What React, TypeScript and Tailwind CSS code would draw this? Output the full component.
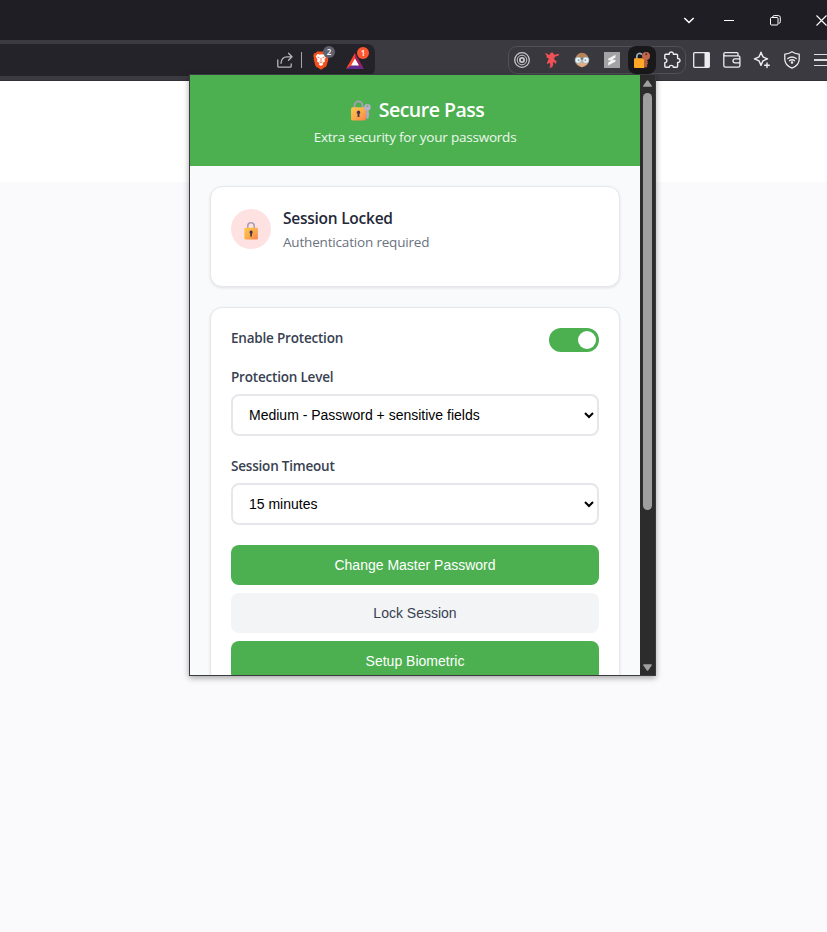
import React from "react";

function Padlock({ className, withKey = false }: { className: string; withKey?: boolean }) {
  return (
    <svg className={className} viewBox={withKey ? "0 0 20 20" : "0 0 16 20"} fill="none">
      <defs>
        <linearGradient id={withKey ? "lockKey" : "lockPlain"} x1="0" y1="0" x2="1" y2="1">
          <stop offset="0" stopColor="#fdc850" />
          <stop offset="0.5" stopColor="#fbad48" />
          <stop offset="1" stopColor="#f9804f" />
        </linearGradient>
      </defs>
      <path
        d={withKey ? "M4.3 8V5.2a3.8 3.8 0 0 1 7.6 0V8" : "M4.6 8V5.2a3.4 3.4 0 0 1 6.8 0V8"}
        stroke="#aaa0b5"
        strokeWidth="1.7"
      />
      <rect x="1" y="7" width="14.2" height="12.6" rx="1.5" fill={withKey ? "url(#lockKey)" : "url(#lockPlain)"} />
      <path d="M8.1 10a1.8 1.8 0 0 1 .9 3.3v3H7.2v-3A1.8 1.8 0 0 1 8.1 10Z" fill="#4b3150" />
      {withKey && (
        <g>
          <path d="M15.4 8.5h2.4v3.2l.8.9-.8.9.6.9-.6.9v1.9l-1.2 1-1.2-1Z" fill="#b3a6c5" />
          <circle cx="16.6" cy="7" r="3.1" fill="#b9afc9" />
          <circle cx="16.7" cy="5.7" r="0.8" fill="#58a75d" />
        </g>
      )}
    </svg>
  );
}

function ShareIcon() {
  return (
    <svg className="h-4 w-4" viewBox="0 0 16 16" fill="none" stroke="#b6b6bc" strokeWidth="1.3" strokeLinecap="round" strokeLinejoin="round">
      <path d="M.8 8v6.2q0 1 1 1h11.4q1 0 1-1v-2.4M4 11.3c.3-4.2 2.6-6.5 6-6.5h4.8M11.5 1.2l3.5 3.6-3.5 3.4" />
    </svg>
  );
}

function LionIcon() {
  return (
    <svg className="h-[19px] w-4" viewBox="0 0 16 19">
      <path d="M4 .5h8l1.4 1.7 1.4-.1 1 3-.8 1.8.4 1.3-2 7L8 18.8l-5.4-3.6-2-7L1 6.9.2 5l1-3 1.4.2Z" fill="#f4511e" />
      <path d="m4.5 3 2 .6L8 3.2l1.5.4 2-.6 1.8 2.4-1.8 3 .5 2-2.4 1.6.6 1.5L8 15l-2.2-1.5.6-1.5L4 10.4l.5-2-1.8-3Z" fill="#fff" />
      <path d="m4.5 6 2 .7M11.5 6l-2 .7M8 7v3.5M6.5 10.8 8 11.6l1.5-.8" stroke="#f4511e" strokeWidth=".8" fill="none" />
    </svg>
  );
}

function TriangleIcon() {
  return (
    <svg className="h-4 w-[18px]" viewBox="0 0 18 16">
      <path d="M9 0 0 16l9-5.5Z" fill="#ff4724" />
      <path d="M9 0v10.5L18 16Z" fill="#9e1f63" />
      <path d="M0 16h18l-9-6Z" fill="#662d91" />
      <path d="m9 5.5 4 7H5Z" fill="#fff" />
    </svg>
  );
}

function TargetIcon() {
  return (
    <svg className="h-4 w-4" viewBox="0 0 16 16" fill="none" stroke="#c7c7cb">
      <circle cx="8" cy="8" r="7.3" strokeWidth="1.3" />
      <circle cx="8" cy="8" r="4.8" strokeWidth="1" />
      <circle cx="8" cy="8" r="2.1" strokeWidth="1.8" />
    </svg>
  );
}

function BirdIcon() {
  return (
    <svg className="h-4 w-4" viewBox="0 0 16 16" fill="#ef5154">
      <path d="M.8.8 4 2.3 5.6 3l1-2.2 2.2-.3 1.4 2.2 5.1-.9-.8 1.8-3 1-1.6 1.8 1 1.6 1.9 1.6-1.5 2.6-.8-2-1.5.2.2 2.8-1.4 2.3H5l1.4-2-.7-2.8L3.5 12l-.7-.8L4.2 8 5 6.8 1.8 4.9l1.3-.5Z" />
    </svg>
  );
}

function FaceIcon() {
  return (
    <svg className="h-4 w-4" viewBox="0 0 16 16">
      <ellipse cx="8" cy="8" rx="7" ry="7.2" fill="#b5835a" />
      <path d="M2 8h12l-1.2 4.5L8 15.2l-4.8-2.7Z" fill="#dfae89" />
      <path d="M.6 6h14.8v2H.6Z" fill="#566069" />
      <circle cx="4.2" cy="8.2" r="3.1" fill="#eef6f9" stroke="#8ba7b4" strokeWidth=".7" />
      <circle cx="11.8" cy="8.2" r="3.1" fill="#eef6f9" stroke="#8ba7b4" strokeWidth=".7" />
      <circle cx="4.6" cy="8.2" r="1" fill="#7ba3b8" />
      <circle cx="11.4" cy="8.2" r="1" fill="#7ba3b8" />
    </svg>
  );
}

function StackIcon() {
  return (
    <svg className="h-4 w-4" viewBox="0 0 16 16">
      <rect width="16" height="16" fill="#a3a3a5" />
      <path d="m4.2 6.8 7.3-4v2.8l-3.4 2 3.4.3v1.5l-7.3 4v-2.8l3.4-2-3.4-.4Z" fill="#f5f5f5" />
    </svg>
  );
}

function LockKeyIcon() {
  return (
    <svg className="h-4 w-4" viewBox="0 0 16 16" fill="none">
      <path d="M2.8 7V4.3a2.8 2.8 0 0 1 5.2-1.5" stroke="#a2b2bd" strokeWidth="1.7" />
      <rect x="0" y="6.3" width="10.6" height="9.7" rx="1" fill="#ffa827" />
      <path d="M10.6 6.5h2.6v2.2l1 .8-1 1 1 1-1 .9v2.2L12 15.8l-1.4-1.2Z" fill="#b55a43" />
      <circle cx="12" cy="4" r="4" fill="#c1674e" />
      <circle cx="12.2" cy="2.2" r="1" fill="#5b302b" />
    </svg>
  );
}

function PuzzleIcon() {
  return (
    <svg className="h-[18px] w-[18px]" viewBox="0 0 18 18" fill="none" stroke="#ededf1" strokeWidth="1.4" strokeLinejoin="round">
      <path d="M2.8 3.2h3.5C5.8.2 10.8.2 10.3 3.2h3.3q1 0 1 1v3.3c3.2-.2 3.2 4.2 0 4v3.8q0 1-1 1h-3.3c.2-2.6-4.2-2.6-4 0H2.8q-1 0-1-1v-3.7c2.8.2 2.8-4.2 0-4V4.2q0-1 1-1Z" />
    </svg>
  );
}

function SidebarIcon() {
  return (
    <svg className="mr-px h-4 w-[17px]" viewBox="0 0 17 16">
      <rect x=".7" y=".7" width="15.6" height="14.6" rx=".8" fill="none" stroke="#ededf1" strokeWidth="1.3" />
      <path d="M11.5 1H16v14h-4.5Z" fill="#ededf1" />
    </svg>
  );
}

function WalletIcon() {
  return (
    <svg className="h-4 w-[18px]" viewBox="0 0 18 16" fill="none" stroke="#ededf1" strokeWidth="1.3" strokeLinejoin="round">
      <path d="M15 4V2q0-1.3-1.3-1.3H2.3Q.8.7.8 2.2v11.3q0 1.7 1.7 1.7h12.8q1.6 0 1.6-1.6V5.3q0-1.4-1.6-1.4H2.5Q.8 3.9.8 2.2M17 6.8h-5q-2 0-2 2t2 2h5" />
    </svg>
  );
}

function SparkIcon() {
  return (
    <svg className="h-[18px] w-[18px]" viewBox="0 0 18 18" fill="none" stroke="#ededf1" strokeWidth="1.4" strokeLinejoin="round" strokeLinecap="round">
      <path d="M8 1.2Q9 3.9 10 5.8q1.9 1 4.6 2-2.7 1-4.6 2-1 1.9-2 4.6-1-2.7-2-4.6-1.9-1-4.6-2 2.7-1 4.6-2 1-1.9 2-4.6ZM14 12v4.5M11.7 14.2h4.6" />
    </svg>
  );
}

function ShieldIcon() {
  return (
    <svg className="h-[18px] w-4" viewBox="0 0 16 18" fill="none" stroke="#ededf1" strokeWidth="1.3" strokeLinejoin="round" strokeLinecap="round">
      <path d="M8 .8q3.4 2.3 7.2 2.4v5.3Q15 14.4 8 17.2 1 14.4.8 8.5V3.2Q4.6 3.1 8 .8ZM3.8 7.5q4.2-3 8.4 0M5.4 9.7q2.6-1.9 5.2 0" />
      <circle cx="8" cy="11.6" r=".6" fill="#ededf1" />
    </svg>
  );
}

function WindowBar() {
  return (
    <div className="flex h-10 shrink-0 items-center bg-[#1f1e24] pl-[683px]">
      <svg className="h-3 w-3 shrink-0" viewBox="0 0 12 12" fill="none" stroke="#fff" strokeWidth="1.6">
        <path d="m1.3 4 4.7 4.5L10.7 4" />
      </svg>
      <div className="ml-[29px] h-px w-[10px] shrink-0 bg-white" />
      <svg className="ml-9 h-[11px] w-[11px] shrink-0" viewBox="0 0 11 11" fill="none" stroke="#fff">
        <rect x=".5" y="2.5" width="7.5" height="7.5" rx="1" />
        <path d="M2.5 2.5Q2.5.6 4.2.6h4.2q1.9 0 1.9 1.9v4.3q0 1.5-1.5 1.5" />
      </svg>
      <svg className="ml-[35px] h-[11px] w-[11px] shrink-0" viewBox="0 0 11 11" stroke="#fff" strokeWidth="1.1">
        <path d="m.5.5 10 10m0-10-10 10" />
      </svg>
    </div>
  );
}

function Slot({ children }: { children: React.ReactNode }) {
  return <div className="flex w-[30px] shrink-0 items-center justify-center">{children}</div>;
}

function Toolbar() {
  return (
    <div className="flex h-[41px] shrink-0 items-center border-b border-[#313036] bg-[#3b3a40]">
      <div className="flex h-8 w-[375px] shrink-0 items-center rounded-r-[8px] bg-[#242329] pl-[277px]">
        <ShareIcon />
        <div className="ml-2 h-4 w-px bg-[#a5a5aa]" />
        <div className="relative ml-[11px] mt-px">
          <LionIcon />
          <span className="absolute -top-[5px] left-[10px] flex h-3 w-3 items-center justify-center rounded-full bg-[#60616e] font-['Open_Sans',sans-serif] text-[8px] font-semibold leading-none text-white">2</span>
        </div>
        <div className="relative ml-[17px] mt-px">
          <TriangleIcon />
          <span className="absolute -top-[6px] left-[11px] flex h-3 w-3 items-center justify-center rounded-full bg-[#ff5630] font-['Open_Sans',sans-serif] text-[8px] font-semibold leading-none text-white">1</span>
        </div>
      </div>
      <div className="ml-[133px] flex h-7 w-[178px] shrink-0 items-center rounded-[9px] border border-[#515056] bg-[#39383e] pr-px">
        <div className="-ml-0.5 flex h-full items-center">
          <Slot><TargetIcon /></Slot>
          <Slot><BirdIcon /></Slot>
          <Slot><FaceIcon /></Slot>
          <Slot><StackIcon /></Slot>
          <div className="mx-px flex h-7 w-7 items-center justify-center rounded-[8px] bg-[#19191b]"><LockKeyIcon /></div>
          <Slot><PuzzleIcon /></Slot>
        </div>
      </div>
      <div className="ml-px flex shrink-0 items-center">
        <Slot><SidebarIcon /></Slot>
        <Slot><WalletIcon /></Slot>
        <Slot><SparkIcon /></Slot>
        <Slot><ShieldIcon /></Slot>
        <div className="ml-[7px] flex w-[14px] flex-col gap-1">
          <i className="h-[1.5px] bg-[#dedee2]" />
          <i className="h-[1.5px] bg-[#dedee2]" />
          <i className="h-[1.5px] bg-[#dedee2]" />
        </div>
      </div>
    </div>
  );
}

function SelectField({ label, value }: { label: string; value: string }) {
  return (
    <label className="flex flex-col">
      <span className="h-5 text-[13.5px] font-semibold leading-5 tracking-[-0.2px] text-[#374151]">{label}</span>
      <select
        defaultValue={value}
        className="mt-[7px] h-[42px] w-full rounded-[8px] border-2 border-[#e5e7eb] bg-white px-3 font-['Liberation_Sans',Arial,sans-serif] text-[14px] text-black"
      >
        <option>{value}</option>
      </select>
    </label>
  );
}

function ActionButton({ children, muted = false }: { children: string; muted?: boolean }) {
  return (
    <button
      className={`h-10 w-full shrink-0 rounded-[8px] font-['Liberation_Sans',Arial,sans-serif] text-[14px] ${
        muted ? "bg-[#f3f4f6] text-[#374151]" : "bg-[#4caf50] text-white"
      }`}
    >
      {children}
    </button>
  );
}

function Popup() {
  return (
    <div className="absolute left-[189px] top-[74px] flex h-[602px] w-[467px] border border-[#3b3a40] bg-[#f9fafb] font-['Open_Sans','Noto_Sans',sans-serif] shadow-[0_2px_6px_rgba(0,0,0,0.35)]">
      <div className="flex h-full w-[450px] shrink-0 flex-col overflow-hidden">
        <header className="flex h-[91px] shrink-0 flex-col items-center bg-[#4caf50] pt-5 text-white">
          <h1 className="flex h-[30px] items-center pl-1 text-[19.5px] font-semibold leading-[30px] tracking-[-0.5px]">
            <Padlock withKey className="mr-2 h-[21px] w-[21px]" />
            Secure Pass
          </h1>
          <p className="mt-0.5 text-[13.5px] leading-5 tracking-[-0.22px] text-white/90">Extra security for your passwords</p>
        </header>
        <main className="flex flex-col gap-5 p-5">
          <section className="flex h-[101px] shrink-0 items-start rounded-[12px] border border-[#e5e7eb] bg-white px-5 pt-[22px] shadow-[0_1px_3px_rgba(0,0,0,0.1)]">
            <div className="flex h-10 w-10 items-center justify-center rounded-full bg-[#fee2e2]">
              <Padlock className="mt-0.5 h-[19px] w-4" />
            </div>
            <div className="ml-3 -mt-[3px]">
              <h2 className="text-[15.5px] font-semibold leading-6 tracking-[-0.25px] text-[#1f2937]">Session Locked</h2>
              <p className="mt-0.5 text-[13.5px] leading-5 tracking-[-0.18px] text-[#6b7280]">Authentication required</p>
            </div>
          </section>
          <section className="flex h-[520px] shrink-0 flex-col rounded-[12px] border border-[#e5e7eb] bg-white px-5 pt-5 shadow-[0_1px_3px_rgba(0,0,0,0.1)]">
            <div className="mb-[15px] flex h-6 items-start justify-between">
              <span className="text-[13.5px] font-semibold leading-5 tracking-[-0.2px] text-[#374151]">Enable Protection</span>
              <button role="switch" aria-checked="true" className="flex h-6 w-[50px] items-center justify-end rounded-full bg-[#4caf50] p-[3px]">
                <span className="h-[18px] w-[18px] rounded-full bg-white" />
              </button>
            </div>
            <div className="flex flex-col gap-5">
              <SelectField label="Protection Level" value="Medium - Password + sensitive fields" />
              <SelectField label="Session Timeout" value="15 minutes" />
              <div className="flex flex-col gap-2">
                <ActionButton>Change Master Password</ActionButton>
                <ActionButton muted>Lock Session</ActionButton>
                <ActionButton>Setup Biometric</ActionButton>
              </div>
            </div>
          </section>
        </main>
      </div>
      <div className="flex w-[15px] shrink-0 flex-col items-center bg-[#2c2c2c] pb-1 pt-[5px]">
        <svg className="h-[7px] w-[9px] shrink-0" viewBox="0 0 9 7"><path d="M3.7.7q.8-1 1.6 0l3.5 5q.5 1-.8 1H1q-1.3 0-.8-1Z" fill="#9f9f9f" /></svg>
        <div className="mt-[6px] h-[417px] w-[9px] shrink-0 rounded-full bg-[#9f9f9f]" />
        <svg className="mt-auto h-[7px] w-[9px] shrink-0" viewBox="0 0 9 7"><path d="M3.7 6.3q.8 1 1.6 0l3.5-5q.5-1-.8-1H1q-1.3 0-.8 1Z" fill="#9f9f9f" /></svg>
      </div>
    </div>
  );
}

export default function App() {
  return (
    <div className="relative flex h-[932px] w-[827px] flex-col overflow-hidden bg-[#fafafc]">
      <WindowBar />
      <Toolbar />
      <div className="h-[101px] shrink-0 bg-white" />
      <Popup />
    </div>
  );
}
